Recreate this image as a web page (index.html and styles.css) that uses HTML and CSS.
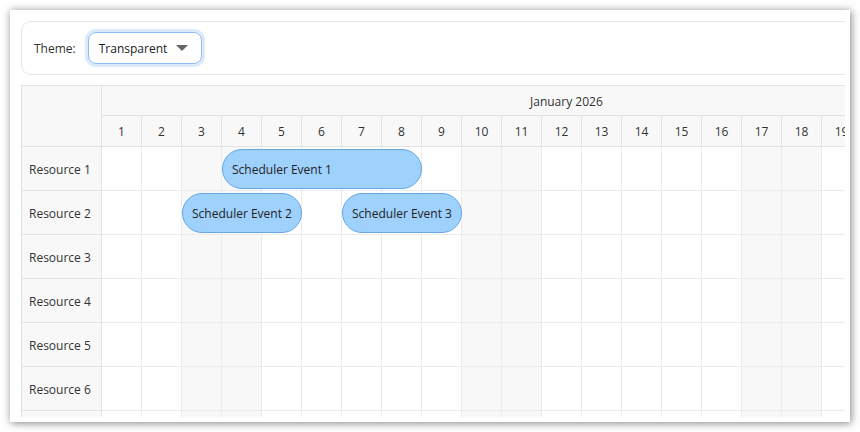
FILE: index.html
```html
<!DOCTYPE html>
<html>
<head>
<meta charset="utf-8">
<link rel="stylesheet" href="styles.css">
</head>
<body>
<div class="window">
  <div class="viewport">
    <div class="toolbar">
      <span class="label">Theme:</span>
      <div class="select">
        <span>Transparent</span>
        <span class="caret"></span>
      </div>
    </div>
    <div class="sched">
      <div class="corner"></div>
      <div class="month"><span class="month-text">January 2026</span></div>
      <div class="days">
        <div class="day">1</div><div class="day">2</div><div class="day">3</div><div class="day">4</div><div class="day">5</div><div class="day">6</div><div class="day">7</div><div class="day">8</div><div class="day">9</div><div class="day">10</div><div class="day">11</div><div class="day">12</div><div class="day">13</div><div class="day">14</div><div class="day">15</div><div class="day">16</div><div class="day">17</div><div class="day">18</div><div class="day">19</div><div class="day"></div>
      </div>

      <div class="res">Resource 1</div>
      <div class="row">
        <div class="c"></div><div class="c"></div><div class="c we"></div><div class="c we"></div><div class="c"></div><div class="c"></div><div class="c"></div><div class="c"></div><div class="c"></div><div class="c we"></div><div class="c we"></div><div class="c"></div><div class="c"></div><div class="c"></div><div class="c"></div><div class="c"></div><div class="c we"></div><div class="c we"></div><div class="c"></div><div class="c"></div>
        <div class="event ev1">Scheduler Event 1</div>
      </div>
      <div class="res">Resource 2</div>
      <div class="row">
        <div class="c"></div><div class="c"></div><div class="c we"></div><div class="c we"></div><div class="c"></div><div class="c"></div><div class="c"></div><div class="c"></div><div class="c"></div><div class="c we"></div><div class="c we"></div><div class="c"></div><div class="c"></div><div class="c"></div><div class="c"></div><div class="c"></div><div class="c we"></div><div class="c we"></div><div class="c"></div><div class="c"></div>
        <div class="event ev2">Scheduler Event 2</div>
        <div class="event ev3">Scheduler Event 3</div>
      </div>
      <div class="res">Resource 3</div>
      <div class="row">
        <div class="c"></div><div class="c"></div><div class="c we"></div><div class="c we"></div><div class="c"></div><div class="c"></div><div class="c"></div><div class="c"></div><div class="c"></div><div class="c we"></div><div class="c we"></div><div class="c"></div><div class="c"></div><div class="c"></div><div class="c"></div><div class="c"></div><div class="c we"></div><div class="c we"></div><div class="c"></div><div class="c"></div>
      </div>
      <div class="res">Resource 4</div>
      <div class="row">
        <div class="c"></div><div class="c"></div><div class="c we"></div><div class="c we"></div><div class="c"></div><div class="c"></div><div class="c"></div><div class="c"></div><div class="c"></div><div class="c we"></div><div class="c we"></div><div class="c"></div><div class="c"></div><div class="c"></div><div class="c"></div><div class="c"></div><div class="c we"></div><div class="c we"></div><div class="c"></div><div class="c"></div>
      </div>
      <div class="res">Resource 5</div>
      <div class="row">
        <div class="c"></div><div class="c"></div><div class="c we"></div><div class="c we"></div><div class="c"></div><div class="c"></div><div class="c"></div><div class="c"></div><div class="c"></div><div class="c we"></div><div class="c we"></div><div class="c"></div><div class="c"></div><div class="c"></div><div class="c"></div><div class="c"></div><div class="c we"></div><div class="c we"></div><div class="c"></div><div class="c"></div>
      </div>
      <div class="res">Resource 6</div>
      <div class="row">
        <div class="c"></div><div class="c"></div><div class="c we"></div><div class="c we"></div><div class="c"></div><div class="c"></div><div class="c"></div><div class="c"></div><div class="c"></div><div class="c we"></div><div class="c we"></div><div class="c"></div><div class="c"></div><div class="c"></div><div class="c"></div><div class="c"></div><div class="c we"></div><div class="c we"></div><div class="c"></div><div class="c"></div>
      </div>
      <div class="res"></div>
      <div class="row">
        <div class="c"></div><div class="c"></div><div class="c we"></div><div class="c we"></div><div class="c"></div><div class="c"></div><div class="c"></div><div class="c"></div><div class="c"></div><div class="c we"></div><div class="c we"></div><div class="c"></div><div class="c"></div><div class="c"></div><div class="c"></div><div class="c"></div><div class="c we"></div><div class="c we"></div><div class="c"></div><div class="c"></div>
      </div>
    </div>
  </div>
</div>
</body>
</html>
```
FILE: styles.css
```css
html, body {
  margin: 0;
  padding: 0;
  background: #ffffff;
}
body {
  font-family: "Open Sans", "Noto Sans", sans-serif;
  font-size: 12px;
  color: #333333;
}
.window {
  margin: 10px;
  width: 840px;
  height: 412px;
  box-sizing: border-box;
  padding: 11px 5px 5px 11px;
  background: #ffffff;
  box-shadow: 1px 1px 8px rgba(0, 0, 0, 0.5);
}
.viewport {
  width: 100%;
  height: 100%;
  overflow: hidden;
}
.toolbar {
  width: 1000px;
  height: 54px;
  box-sizing: border-box;
  border: 1px solid #e6e6e6;
  border-radius: 10px;
  display: flex;
  align-items: center;
  padding-left: 12px;
  gap: 12px;
}
.label {
  color: #333;
}
.select {
  width: 114px;
  height: 32px;
  box-sizing: border-box;
  border: 1px solid #8cbcf2;
  border-radius: 8px;
  box-shadow: 0 0 0 3px #dde9fb;
  display: flex;
  align-items: center;
  padding: 0 13px 0 10px;
  justify-content: space-between;
  color: #222;
}
.caret {
  width: 0;
  height: 0;
  border-left: 6px solid transparent;
  border-right: 6px solid transparent;
  border-top: 6px solid #666;
}
.sched {
  margin-top: 10px;
  display: grid;
  grid-template-columns: 80px 800px;
  grid-template-rows: 30px 31px repeat(7, 44px);
  border-left: 1px solid #e2e2e2;
  border-top: 1px solid #e2e2e2;
  width: 881px;
}
.corner {
  grid-row: 1 / span 2;
  background: #f8f8f8;
  border-right: 1px solid #e2e2e2;
  border-bottom: 1px solid #e2e2e2;
}
.month {
  background: #f8f8f8;
  border-bottom: 1px solid #e2e2e2;
  display: flex;
  align-items: center;
  padding-left: 428px;
  padding-top: 2px;
}
.days {
  display: flex;
  background: #f8f8f8;
}
.day {
  width: 40px;
  flex: none;
  box-sizing: border-box;
  border-right: 1px solid #e2e2e2;
  border-bottom: 1px solid #e2e2e2;
  display: flex;
  align-items: center;
  justify-content: center;
  padding-top: 1px;
}
.res {
  background: #f8f8f8;
  border-right: 1px solid #e2e2e2;
  border-bottom: 1px solid #e2e2e2;
  display: flex;
  align-items: center;
  padding-left: 7px;
  padding-top: 2px;
}
.row {
  position: relative;
  display: flex;
}
.c {
  width: 40px;
  flex: none;
  box-sizing: border-box;
  border-right: 1px solid #ebebeb;
  border-bottom: 1px solid #ebebeb;
}
.c.we {
  background: #f8f8f8;
}
.event {
  position: absolute;
  top: 2px;
  height: 40px;
  box-sizing: border-box;
  background: #9fd1fd;
  border: 1px solid #66a6e2;
  border-radius: 20px;
  display: flex;
  align-items: center;
  padding-left: 9px;
  color: #222;
  white-space: nowrap;
}
.ev1 { left: 120px; width: 200px; }
.ev2 { left: 80px; width: 120px; }
.ev3 { left: 240px; width: 120px; }
```
